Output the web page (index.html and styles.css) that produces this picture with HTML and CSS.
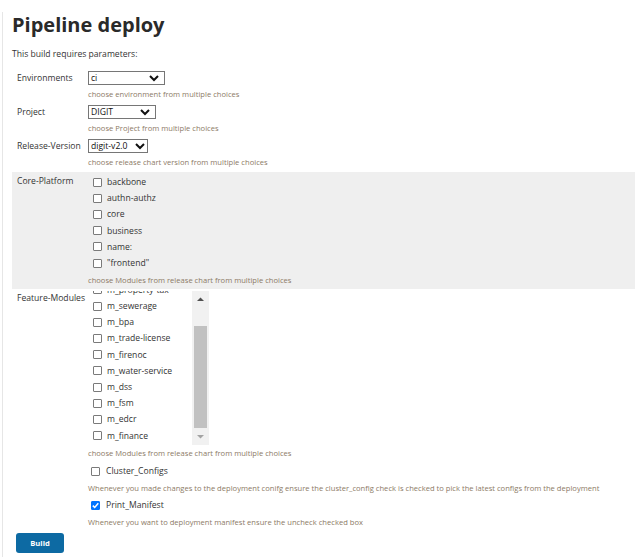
FILE: index.html
```html
<!DOCTYPE html>
<html>
<head>
<meta charset="utf-8">
<title>Pipeline deploy</title>
<link rel="stylesheet" href="styles.css">
</head>
<body>
<div class="page">
  <h1 class="title">Pipeline deploy</h1>
  <p class="intro">This build requires parameters:</p>
  <div class="params">
    <div class="param">
      <div class="label">Environments</div>
      <div class="value">
        <div class="select w-env"><span>ci</span><svg class="chev" width="10" height="7" viewBox="0 0 10 7"><polyline points="1,1 5,5 9,1" fill="none" stroke="#111" stroke-width="2"/></svg></div>
        <div class="help">choose environment from multiple choices</div>
      </div>
    </div>
    <div class="param">
      <div class="label">Project</div>
      <div class="value">
        <div class="select w-proj"><span>DIGIT</span><svg class="chev" width="10" height="7" viewBox="0 0 10 7"><polyline points="1,1 5,5 9,1" fill="none" stroke="#111" stroke-width="2"/></svg></div>
        <div class="help">choose Project from multiple choices</div>
      </div>
    </div>
    <div class="param">
      <div class="label">Release-Version</div>
      <div class="value">
        <div class="select w-rel"><span>digit-v2.0</span><svg class="chev" width="10" height="7" viewBox="0 0 10 7"><polyline points="1,1 5,5 9,1" fill="none" stroke="#111" stroke-width="2"/></svg></div>
        <div class="help">choose release chart version from multiple choices</div>
      </div>
    </div>
    <div class="param shaded">
      <div class="label">Core-Platform</div>
      <div class="value">
        <ul class="checklist">
          <li class="item"><span class="box"></span>backbone</li>
          <li class="item"><span class="box"></span>authn-authz</li>
          <li class="item"><span class="box"></span>core</li>
          <li class="item"><span class="box"></span>business</li>
          <li class="item"><span class="box"></span>name:</li>
          <li class="item"><span class="box"></span>"frontend"</li>
        </ul>
        <div class="help">choose Modules from release chart from multiple choices</div>
      </div>
    </div>
    <div class="param feature">
      <div class="label">Feature-Modules</div>
      <div class="value">
        <div class="scrollbox">
          <div class="viewport">
            <ul class="checklist scrolled">
              <li class="item"><span class="box"></span>m_property-tax</li>
              <li class="item"><span class="box"></span>m_sewerage</li>
              <li class="item"><span class="box"></span>m_bpa</li>
              <li class="item"><span class="box"></span>m_trade-license</li>
              <li class="item"><span class="box"></span>m_firenoc</li>
              <li class="item"><span class="box"></span>m_water-service</li>
              <li class="item"><span class="box"></span>m_dss</li>
              <li class="item"><span class="box"></span>m_fsm</li>
              <li class="item"><span class="box"></span>m_edcr</li>
              <li class="item"><span class="box"></span>m_finance</li>
            </ul>
          </div>
          <div class="scrollbar">
            <svg class="arrow" width="17" height="17" viewBox="0 0 17 17"><polygon points="5,10 12,10 8.5,6.5" fill="#505050"/></svg>
            <div class="track"><div class="thumb"></div></div>
            <svg class="arrow" width="17" height="17" viewBox="0 0 17 17"><polygon points="5,7 12,7 8.5,10.5" fill="#a3a3a3"/></svg>
          </div>
        </div>
        <div class="help">choose Modules from release chart from multiple choices</div>
      </div>
    </div>
    <div class="param bool">
      <div class="label"></div>
      <div class="value">
        <div class="check"><span class="box"></span>Cluster_Configs</div>
        <div class="help">Whenever you made changes to the deployment conifg ensure the cluster_config check is checked to pick the latest configs from the deployment</div>
      </div>
    </div>
    <div class="param bool">
      <div class="label"></div>
      <div class="value">
        <div class="check"><span class="box checked"><svg width="9" height="9" viewBox="0 0 9 9"><polyline points="1.8,4.6 3.7,6.5 7.3,2.3" fill="none" stroke="#fff" stroke-width="1.5"/></svg></span>Print_Manifest</div>
        <div class="help">Whenever you want to deployment manifest ensure the uncheck checked box</div>
      </div>
    </div>
  </div>
  <button class="build">Build</button>
</div>
</body>
</html>
```

FILE: styles.css
```css
html, body {
  margin: 0;
  padding: 0;
  background: #fff;
}
body {
  font-family: "Open Sans", "Noto Sans", sans-serif;
  color: #333;
  font-size: 8.6px;
}
.page {
  margin-left: 2px;
  border-left: 1px solid #e6e6e6;
  padding-left: 9px;
  min-height: 557px;
  box-sizing: border-box;
}
.title {
  margin: 12px 0 0;
  font-size: 20px;
  line-height: 26px;
  font-weight: 700;
  color: #2a2a2a;
}
.intro {
  margin: 10px 0 0;
  line-height: 12px;
  font-size: 8.6px;
}
.params {
  margin-top: 8px;
}
.param {
  display: grid;
  grid-template-columns: 71px 1fr;
  padding: 3px 0 2px 5px;
}
.label {
  line-height: 14px;
  font-size: 8.6px;
  white-space: nowrap;
}
.value {
  min-width: 0;
}
.select {
  box-sizing: border-box;
  height: 14px;
  border: 1px solid #767676;
  display: flex;
  align-items: center;
  justify-content: space-between;
  padding: 0 5px 0 2px;
  font-size: 8.6px;
  color: #111;
  background: #fff;
}
.w-env { width: 77px; }
.w-proj { width: 68px; }
.w-rel { width: 60px; padding-right: 2px; }
.chev { display: block; }
.help {
  margin-top: 3px;
  line-height: 12px;
  font-size: 7.6px;
  color: #8c7a66;
  white-space: nowrap;
}
.shaded {
  background: #efefef;
  margin-top: 2px;
  padding-top: 2px;
  padding-bottom: 3px;
}
.checklist {
  list-style: none;
  margin: 0;
  padding: 0;
}
.item {
  height: 16.2px;
  display: flex;
  align-items: center;
  padding-left: 5px;
  font-size: 8.6px;
  white-space: nowrap;
}
.box {
  box-sizing: border-box;
  width: 9px;
  height: 9px;
  border: 1px solid #7a7a7a;
  border-radius: 1px;
  background: #fff;
  margin-right: 5px;
  flex: none;
}
.box.checked {
  background: #0075ff;
  border-color: #0075ff;
  position: relative;
}
.box.checked svg {
  position: absolute;
  left: -1px;
  top: -1px;
}
.feature {
  padding-top: 0;
}
.feature .label {
  padding-top: 2px;
}
.scrollbox {
  display: flex;
  width: 121px;
  height: 156px;
}
.viewport {
  flex: 1;
  overflow: hidden;
  margin-top: 2px;
  background: #fff;
}
.scrolled {
  margin-top: -9.3px;
}
.scrollbar {
  width: 17px;
  margin-top: 2px;
  background: #f1f1f1;
  display: flex;
  flex-direction: column;
}
.arrow { display: block; flex: none; }
.track {
  flex: 1;
  display: flex;
  flex-direction: column;
  justify-content: flex-end;
  padding: 0 2px;
}
.thumb {
  height: 102px;
  background: #c1c1c1;
}
.feature .help {
  margin-top: 2px;
}
.bool {
  padding: 2px 0 1px 5px;
}
.check {
  height: 16px;
  display: flex;
  align-items: center;
  padding-left: 3px;
  font-size: 8.6px;
}
.check .box {
  margin-right: 6px;
}
.build {
  display: block;
  margin: 4px 0 0 4px;
  width: 48px;
  height: 20px;
  border: none;
  border-radius: 3px;
  background: #0d6aa3;
  color: #fff;
  font-family: "Open Sans", "Noto Sans", sans-serif;
  font-weight: 700;
  font-size: 7.6px;
  padding: 0;
}
```
